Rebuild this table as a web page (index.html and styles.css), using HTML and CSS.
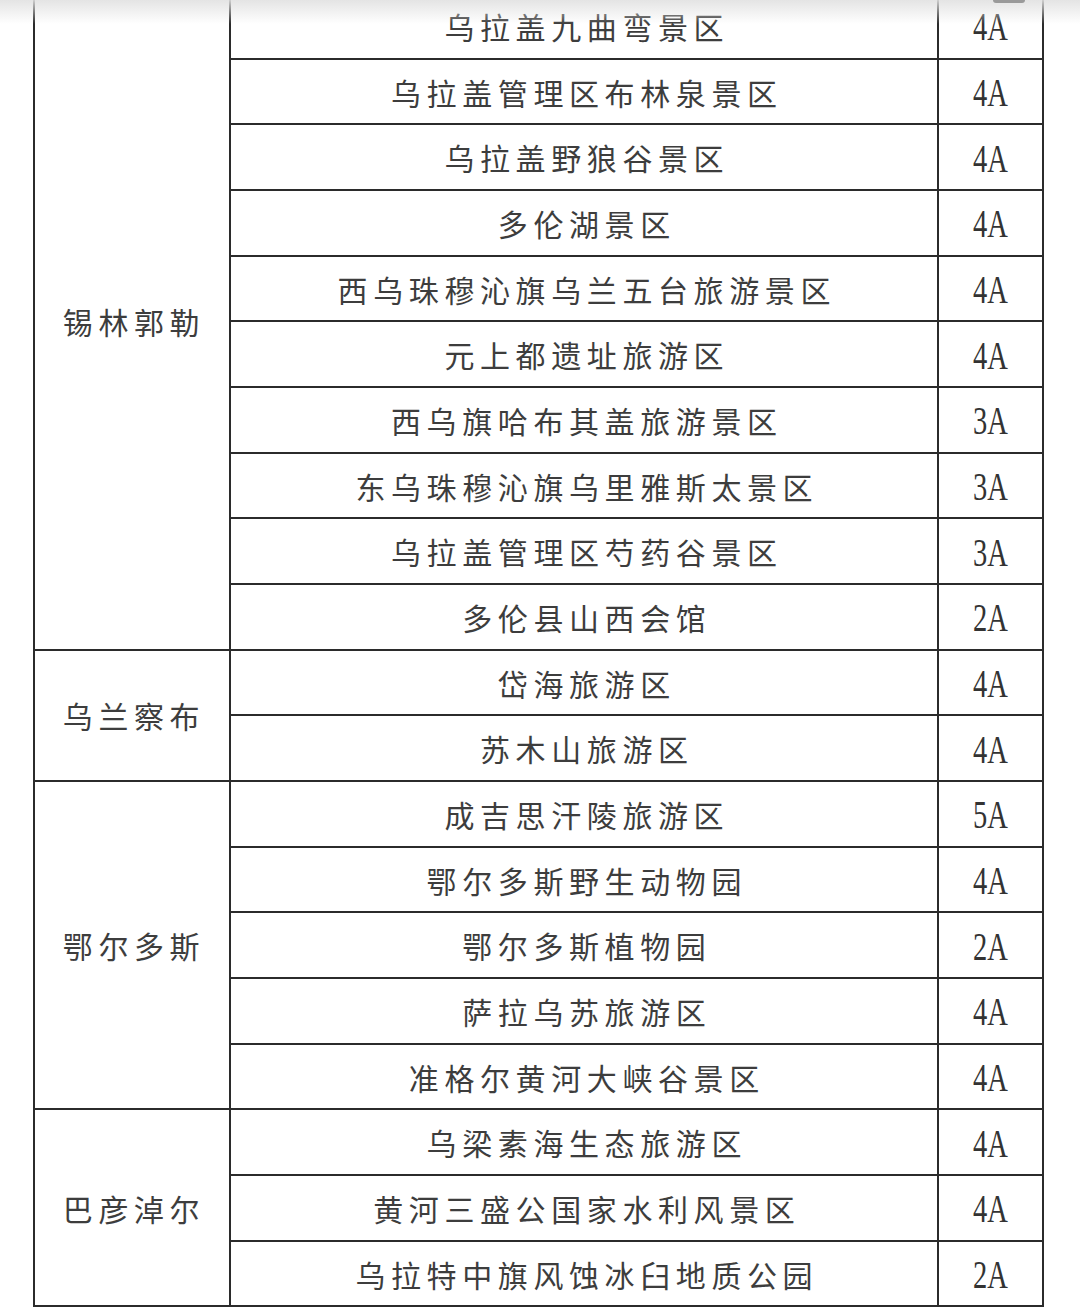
FILE: index.html
```html
<!DOCTYPE html>
<html lang="zh-CN">
<head>
<meta charset="utf-8">
<title>景区名录</title>
<link rel="stylesheet" href="styles.css">
</head>
<body>
<div class="page">
  <table class="grid">
    <colgroup><col class="c1"><col class="c2"><col class="c3"></colgroup>
    <tbody>
      <tr><td class="city" rowspan="10">锡林郭勒</td><td class="name">乌拉盖九曲弯景区</td><td class="lvl"><span>4A</span></td></tr>
      <tr><td class="name">乌拉盖管理区布林泉景区</td><td class="lvl"><span>4A</span></td></tr>
      <tr><td class="name">乌拉盖野狼谷景区</td><td class="lvl"><span>4A</span></td></tr>
      <tr><td class="name">多伦湖景区</td><td class="lvl"><span>4A</span></td></tr>
      <tr><td class="name">西乌珠穆沁旗乌兰五台旅游景区</td><td class="lvl"><span>4A</span></td></tr>
      <tr><td class="name">元上都遗址旅游区</td><td class="lvl"><span>4A</span></td></tr>
      <tr><td class="name">西乌旗哈布其盖旅游景区</td><td class="lvl"><span>3A</span></td></tr>
      <tr><td class="name">东乌珠穆沁旗乌里雅斯太景区</td><td class="lvl"><span>3A</span></td></tr>
      <tr><td class="name">乌拉盖管理区芍药谷景区</td><td class="lvl"><span>3A</span></td></tr>
      <tr><td class="name">多伦县山西会馆</td><td class="lvl"><span>2A</span></td></tr>
      <tr><td class="city" rowspan="2">乌兰察布</td><td class="name">岱海旅游区</td><td class="lvl"><span>4A</span></td></tr>
      <tr><td class="name">苏木山旅游区</td><td class="lvl"><span>4A</span></td></tr>
      <tr><td class="city" rowspan="5">鄂尔多斯</td><td class="name">成吉思汗陵旅游区</td><td class="lvl"><span>5A</span></td></tr>
      <tr><td class="name">鄂尔多斯野生动物园</td><td class="lvl"><span>4A</span></td></tr>
      <tr><td class="name">鄂尔多斯植物园</td><td class="lvl"><span>2A</span></td></tr>
      <tr><td class="name">萨拉乌苏旅游区</td><td class="lvl"><span>4A</span></td></tr>
      <tr><td class="name">准格尔黄河大峡谷景区</td><td class="lvl"><span>4A</span></td></tr>
      <tr><td class="city" rowspan="3">巴彦淖尔</td><td class="name">乌梁素海生态旅游区</td><td class="lvl"><span>4A</span></td></tr>
      <tr><td class="name">黄河三盛公国家水利风景区</td><td class="lvl"><span>4A</span></td></tr>
      <tr><td class="name">乌拉特中旗风蚀冰臼地质公园</td><td class="lvl"><span>2A</span></td></tr>
    </tbody>
  </table>
  <div class="shade"></div>
  <div class="nub"></div>
</div>
</body>
</html>
```

FILE: styles.css
```css
html, body {
  margin: 0;
  padding: 0;
  background: #ffffff;
}
.page {
  position: relative;
  width: 1080px;
  height: 1314px;
  overflow: hidden;
  background: #ffffff;
}
.grid {
  border-collapse: collapse;
  margin: -8px 0 0 33px;
  width: 1009px;
  table-layout: fixed;
  font-family: "Noto Sans CJK SC", "Noto Sans", sans-serif;
  color: #3d3d3d;
}
.c1 { width: 196px; }
.c2 { width: 708px; }
.c3 { width: 105px; }
.grid td {
  border: 2px solid #2b2b2b;
  height: 63.68px;
  padding: 0;
  text-align: center;
  vertical-align: middle;
  font-size: 30px;
  line-height: 32px;
  letter-spacing: 5.6px;
  text-indent: 5.6px;
  white-space: nowrap;
}
.grid td.city {
  text-indent: 4px;
}
.grid td.lvl {
  letter-spacing: 0;
  text-indent: 0;
}
.lvl span {
  display: inline-block;
  font-family: "Liberation Serif", serif;
  font-size: 30px;
  color: #333333;
  transform: scale(0.95, 1.3);
  transform-origin: center center;
}
.shade {
  position: absolute;
  left: 0;
  top: 0;
  width: 1080px;
  height: 24px;
  background: linear-gradient(to bottom, rgba(225,225,225,0.9), rgba(255,255,255,0));
  pointer-events: none;
}
.nub {
  position: absolute;
  left: 993px;
  top: 0;
  width: 32px;
  height: 3px;
  border-radius: 0 0 6px 6px;
  background: #9a9a9a;
}
```
